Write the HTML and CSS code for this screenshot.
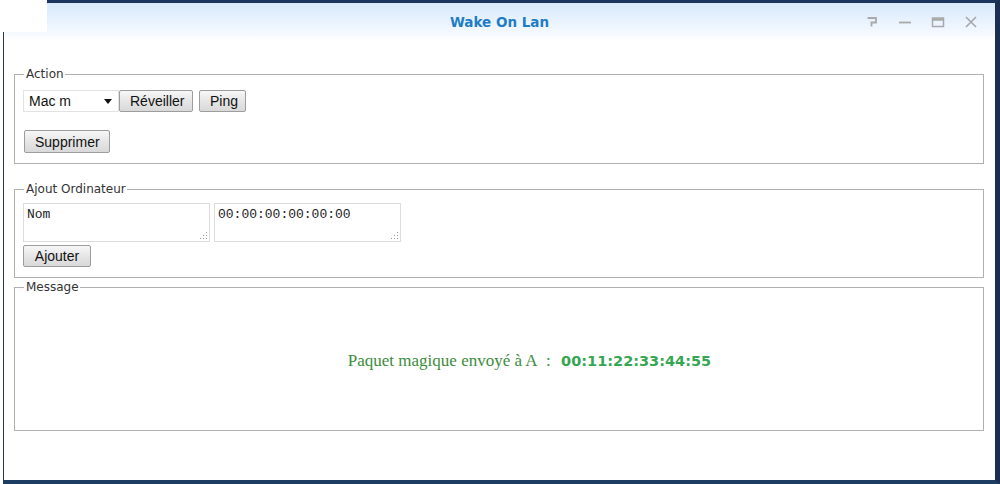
FILE: index.html
```html
<!DOCTYPE html>
<html lang="fr">
<head>
<meta charset="utf-8">
<title>Wake On Lan</title>
<link rel="stylesheet" href="styles.css">
</head>
<body>
<div class="window">
  <div class="titlebar">
    <div class="title">Wake On Lan</div>
    <div class="controls">
      <svg class="ctl" viewBox="0 0 14 14" width="14" height="14"><path d="M2.5 3 H11 V7.5 H6.5 V11.5" fill="none" stroke="#a9a9a9" stroke-width="1.8"/></svg>
      <svg class="ctl" viewBox="0 0 14 14" width="14" height="14"><path d="M1 7.5 H13" fill="none" stroke="#a9a9a9" stroke-width="1.8"/></svg>
      <svg class="ctl" viewBox="0 0 14 14" width="14" height="14"><rect x="1.5" y="3" width="11" height="8.5" fill="none" stroke="#a9a9a9" stroke-width="1.5"/><path d="M1.5 4.5 H12.5" stroke="#a9a9a9" stroke-width="2.5"/></svg>
      <svg class="ctl" viewBox="0 0 14 14" width="14" height="14"><path d="M2 2 L12 12 M12 2 L2 12" fill="none" stroke="#a9a9a9" stroke-width="1.7"/></svg>
    </div>
  </div>
  <div class="content">
    <fieldset class="box box-action">
      <legend>Action</legend>
      <div class="row">
        <div class="select"><span>Mac m</span><span class="arrow"></span></div>
        <button class="btn btn-rev">Réveiller</button>
        <button class="btn btn-ping">Ping</button>
      </div>
      <div class="row row-del">
        <button class="btn btn-del">Supprimer</button>
      </div>
    </fieldset>
    <fieldset class="box box-add">
      <legend>Ajout Ordinateur</legend>
      <div class="row">
        <div class="area">Nom<span class="grip"></span></div>
        <div class="area">00:00:00:00:00:00<span class="grip"></span></div>
      </div>
      <div class="row row-add">
        <button class="btn btn-add">Ajouter</button>
      </div>
    </fieldset>
    <fieldset class="box box-msg">
      <legend>Message</legend>
      <div class="msg">
        <span class="msg-text">Paquet magique envoyé à A&nbsp; :&nbsp;</span>
        <span class="msg-mac">00:11:22:33:44:55</span>
      </div>
    </fieldset>
  </div>
</div>
<div class="corner"></div>
</body>
</html>
```
FILE: styles.css
```css
html, body {
  margin: 0;
  padding: 0;
  background: #fff;
  width: 1000px;
  height: 484px;
  overflow: hidden;
  position: relative;
}
.window {
  box-sizing: border-box;
  margin-left: 3px;
  width: 997px;
  height: 484px;
  border-top: 3px solid #1b355e;
  border-right: 5px solid #1b2f50;
  border-bottom: 4px solid #1d3d63;
  border-left: 1px solid #2a3550;
  background: #fff;
  display: flex;
  flex-direction: column;
}
.titlebar {
  height: 37px;
  flex: none;
  background: linear-gradient(#d7e9fc, #f4f9ff 80%, #ffffff);
  display: flex;
  align-items: center;
  justify-content: center;
  position: relative;
}
.title {
  font-family: "DejaVu Sans", Verdana, sans-serif;
  font-weight: bold;
  font-size: 13.5px;
  color: #1f7dc5;
  margin-top: 1px;
}
.controls {
  position: absolute;
  right: 17px;
  top: 12px;
  display: flex;
  gap: 19px;
}
.ctl { display: block; }
.content {
  padding: 27px 11px 0 10px;
  font-family: "DejaVu Sans", Verdana, sans-serif;
}
.box {
  margin: 0;
  border: 1px solid #b0b0b0;
  padding: 0 8px 10px 8px;
  min-width: 0;
}
.box legend {
  font-size: 12px;
  line-height: 14px;
  color: #333;
  padding: 0 1px 0 2px;
  margin-left: 1px;
}
.row {
  display: flex;
  align-items: flex-start;
}
.box-action .row:first-of-type { margin-top: 9px; }
.row-del { margin-top: 18px; }
.box-add { margin-top: 18px; }
.box-add .row:first-of-type { margin-top: 7px; }
.row-add { margin-top: 3px; }
.box-msg { margin-top: 2px; height: 151px; box-sizing: border-box; padding-bottom: 0; }

.select {
  box-sizing: border-box;
  width: 96px;
  height: 22px;
  border: 1px solid #e2e2e2;
  background: #fff;
  font-family: "Liberation Sans", Arial, sans-serif;
  font-size: 14px;
  color: #111;
  display: flex;
  align-items: center;
  justify-content: space-between;
  padding: 0 6px 0 5px;
}
.arrow {
  width: 0;
  height: 0;
  border-left: 4px solid transparent;
  border-right: 4px solid transparent;
  border-top: 5px solid #111;
}
.btn {
  box-sizing: border-box;
  height: 22px;
  border: 1px solid #9d9d9d;
  border-radius: 2px;
  background: linear-gradient(#f7f7f7, #e6e6e6 50%, #d9d9d9);
  font-family: "Liberation Sans", Arial, sans-serif;
  font-size: 14px;
  color: #111;
  padding: 0 10px;
  margin: 0;
  line-height: 20px;
}
.btn-rev { width: 74px; margin-left: 0; }
.btn-ping { width: 47px; margin-left: 6px; }
.btn-del { width: 86px; margin-left: 1px; height: 23px; }
.btn-add { width: 68px; }

.area {
  box-sizing: border-box;
  width: 187px;
  height: 39px;
  border: 1px solid #dcdcdc;
  background: #fff;
  font-family: "Liberation Mono", "Courier New", monospace;
  font-size: 13px;
  color: #222;
  padding: 3px 3px;
  position: relative;
}
.area + .area { margin-left: 4px; }
.grip {
  position: absolute;
  right: 2px;
  bottom: 2px;
  width: 8px;
  height: 8px;
  background:
    radial-gradient(circle, #999 0.8px, transparent 1px) 0 0 / 3px 3px;
  clip-path: polygon(100% 0, 100% 100%, 0 100%);
}
.msg {
  height: 134px;
  display: flex;
  align-items: center;
  justify-content: center;
  padding-left: 61px;
  box-sizing: border-box;
}
.msg-text {
  font-family: "Liberation Serif", "Times New Roman", serif;
  font-size: 17px;
  color: #3b8d3b;
}
.msg-mac {
  font-family: "DejaVu Sans", Verdana, sans-serif;
  font-weight: bold;
  font-size: 14.5px;
  color: #35a652;
  margin-left: 6px;
}
.corner {
  position: absolute;
  left: 0;
  top: 0;
  width: 47px;
  height: 32px;
  background: #fff;
}
```
